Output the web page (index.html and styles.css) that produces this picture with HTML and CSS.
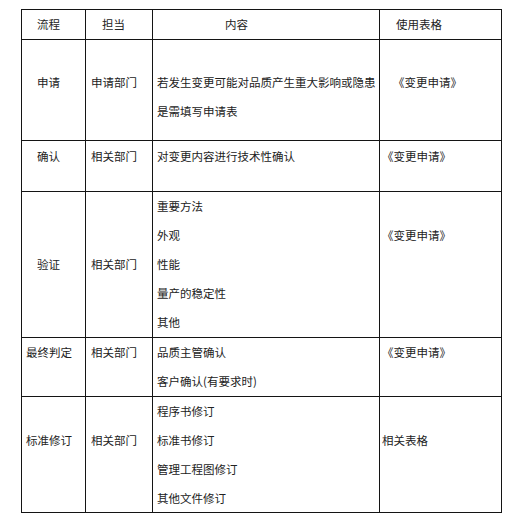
FILE: index.html
```html
<!DOCTYPE html>
<html lang="zh-CN">
<head>
<meta charset="utf-8">
<link rel="stylesheet" href="styles.css">
</head>
<body>
<div class="page">
  <div class="table">
    <div class="cell c1 p-top0 ind2">流程</div>
    <div class="cell c2 p-top0 ind2">担当</div>
    <div class="cell c3 p-top0 head-mid">内容</div>
    <div class="cell c4 p-top0 ind2">使用表格</div>

    <div class="cell c1 p-r1 ind2">申请</div>
    <div class="cell c2 p-r1">申请部门</div>
    <div class="cell c3 p-r1"><p>若发生变更可能对品质产生重大影响或隐患</p><p>是需填写申请表</p></div>
    <div class="cell c4 p-r1 ind1">《变更申请》</div>

    <div class="cell c1 p-r2 ind2">确认</div>
    <div class="cell c2 p-r2">相关部门</div>
    <div class="cell c3 p-r2">对变更内容进行技术性确认</div>
    <div class="cell c4 p-r2">《变更申请》</div>

    <div class="cell c1 p-l3 ind2">验证</div>
    <div class="cell c2 p-l3">相关部门</div>
    <div class="cell c3"><p>重要方法</p><p>外观</p><p>性能</p><p>量产的稳定性</p><p>其他</p></div>
    <div class="cell c4 p-l2">《变更申请》</div>

    <div class="cell c1">最终判定</div>
    <div class="cell c2">相关部门</div>
    <div class="cell c3"><p>品质主管确认</p><p>客户确认(有要求时)</p></div>
    <div class="cell c4">《变更申请》</div>

    <div class="cell c1 p-l2">标准修订</div>
    <div class="cell c2 p-l2">相关部门</div>
    <div class="cell c3"><p>程序书修订</p><p>标准书修订</p><p>管理工程图修订</p><p>其他文件修订</p></div>
    <div class="cell c4 p-l2">相关表格</div>
  </div>
</div>
</body>
</html>
```

FILE: styles.css
```css
html, body {
  margin: 0;
  padding: 0;
  background: #ffffff;
}

.page {
  padding: 9px 0 0 21px;
}

.table {
  display: grid;
  grid-template-columns: 63px 66px 226px 121px;
  grid-template-rows: 29px 100px 50px 145px 58px 115px;
  gap: 1px;
  padding: 1px;
  background: #141414;
  width: max-content;
  font-family: "Noto Sans CJK SC", "Noto Sans", sans-serif;
  font-size: 11.5px;
  line-height: 29px;
  color: #222222;
}

.cell {
  background: #ffffff;
  white-space: nowrap;
  overflow: hidden;
}

.cell p {
  margin: 0;
}

.c1 { padding-left: 4px; }
.c2 { padding-left: 5px; }
.c3 { padding-left: 4px; }
.c4 { padding-left: 2px; }

.c1.ind2 { padding-left: 15px; }
.c2.ind2 { padding-left: 16px; }
.c4.ind2 { padding-left: 16px; }
.c4.ind1 { padding-left: 13px; }
.head-mid { padding-left: 72px; }

.p-top0 { padding-top: 0; }
.p-r1 { padding-top: 28px; }
.p-r2 { padding-top: 1px; }
.p-l2 { padding-top: 29px; }
.p-l3 { padding-top: 58px; }
```
